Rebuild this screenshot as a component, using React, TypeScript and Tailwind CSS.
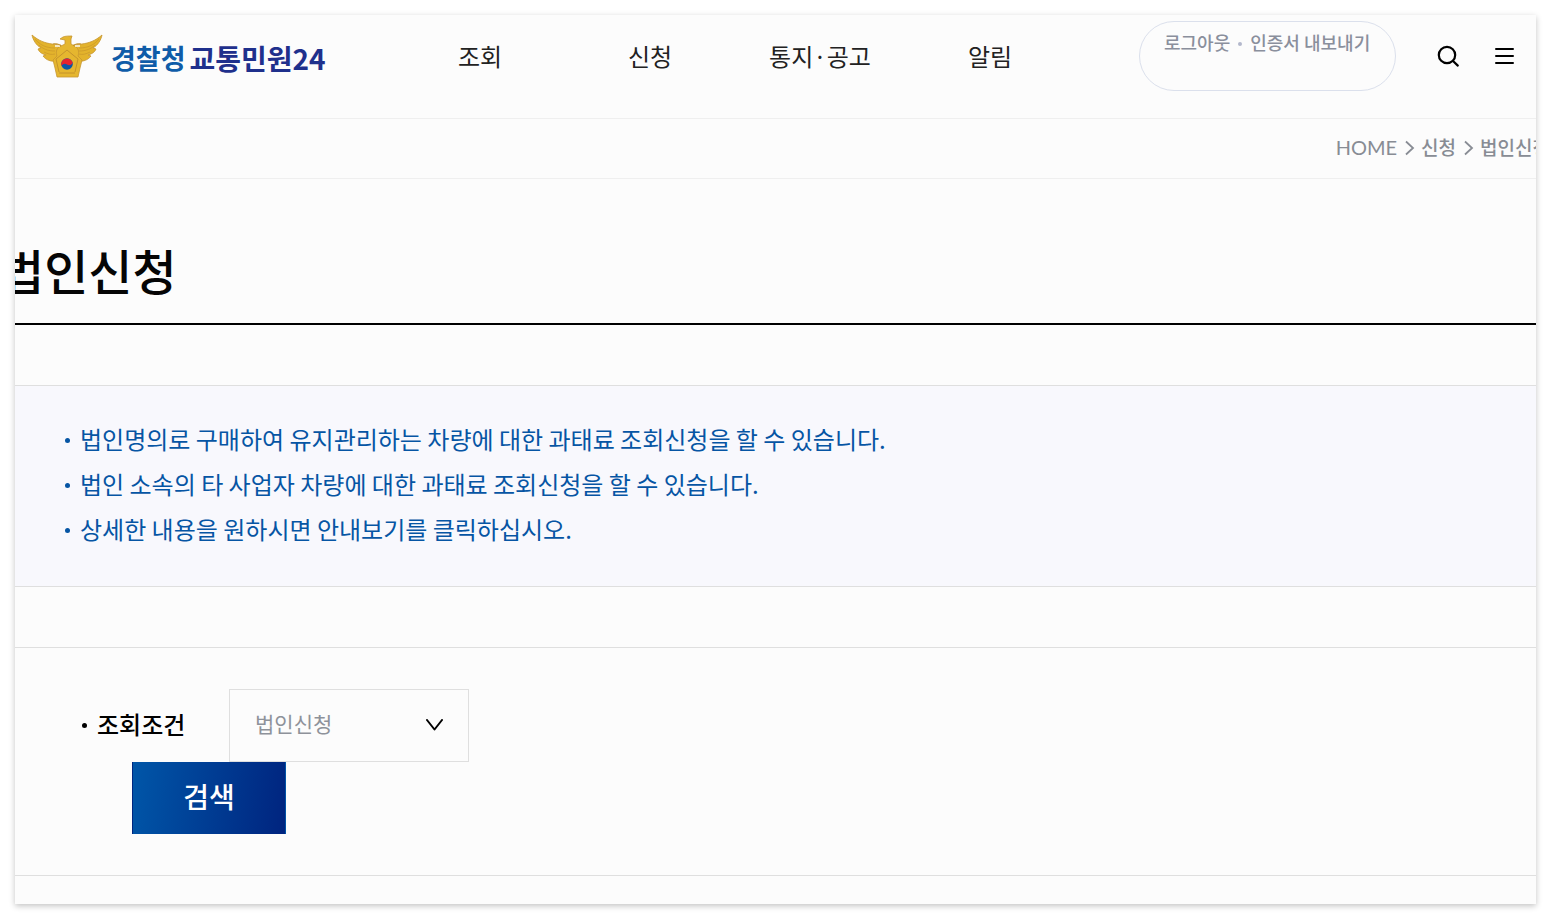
import { useState } from 'react'

const MENUS = ['조회', '신청', '통지·공고', '알림']

const NOTICES = [
  '법인명의로 구매하여 유지관리하는 차량에 대한 과태료 조회신청을 할 수 있습니다.',
  '법인 소속의 타 사업자 차량에 대한 과태료 조회신청을 할 수 있습니다.',
  '상세한 내용을 원하시면 안내보기를 클릭하십시오.',
]

function Emblem() {
  return (
    <svg className="w-[72px] h-[46px] shrink-0" viewBox="0 0 72 46" fill="none" aria-hidden="true">
      {/* wings */}
      <path
        d="M1 2c7 6 13 8 20 9l9 1v11l-4 5c-6 1-11-1-14-5l3-1c-4-1-7-3-8-6l3-1C5 12 2 7 1 2Z"
        fill="#e3b32c" stroke="#c79630" strokeWidth="0.8"
      />
      <path
        d="M71 2c-7 6-13 8-20 9l-9 1v11l4 5c6 1 11-1 14-5l-3-1c4-1 7-3 8-6l-3-1c5-3 8-8 9-13Z"
        fill="#e3b32c" stroke="#c79630" strokeWidth="0.8"
      />
      <path
        d="M4 6c5 6 11 9 20 9M8 12c4 4 9 6 16 6M13 19c4 2 7 3 11 2M68 6c-5 6-11 9-20 9M64 12c-4 4-9 6-16 6M59 19c-4 2-7 3-11 2"
        stroke="#cf9d2a" strokeWidth="0.9"
      />
      {/* head and body */}
      <path
        d="M29 6l3-2c2-1 6-1 9-1l-1 3v5l5 3c3 2 3 6 2 9l4 4-2 8-2 9H26l-2-9-2-8 4-4c-1-3-1-7 2-9l6-3V7l-5-1Z"
        fill="#e5b62f" stroke="#c79630" strokeWidth="0.8"
      />
      <path
        d="M24 12h5v2h-5zM44 12h5v2h-5z"
        fill="#f4e7c2"
      />
      <path
        d="M22 11c3-1 6 0 8 2M50 11c-3-1-6 0-8 2M36 17l-6 5-5 4 3 13M36 17l6 5 5 4-3 13M28 40h16"
        stroke="#c08f2b" strokeWidth="0.9"
      />
      {/* taegeuk */}
      <circle cx="36" cy="31" r="5.8" fill="#0b57a6" />
      <path d="M30.5 33a5.8 5.8 0 1 1 11.2-3.4c-1.2 3-3.8 3.2-5.7 1.8s-4.2-.9-5.5 1.6Z" fill="#e5232e" />
    </svg>
  )
}

function Crumb() {
  return (
    <svg className="w-2.5 h-4 mt-0.5 shrink-0" viewBox="0 0 10 16" fill="none" stroke="currentColor" strokeWidth="1.8" aria-hidden="true">
      <path d="M1 1.5 8 8l-7 6.5" />
    </svg>
  )
}

function Header() {
  return (
    <header className="flex items-center pt-1.5 pb-[27px] pl-4 pr-5 border-b border-[#efefef]">
      <a href="#home" className="flex items-center gap-2 w-[364px] shrink-0 whitespace-nowrap">
        <Emblem />
        <span className="flex gap-1 pt-1 leading-9 font-bold">
          <span className="text-[27px] text-[#0f5ca8]">경찰청</span>
          <span className="text-[28px] text-[#1f308c]">교통민원24</span>
        </span>
      </a>

      <nav className="grid grid-cols-4 flex-1 max-w-[680px]">
        {MENUS.map((menu) => (
          <a key={menu} href="#menu" className="text-center text-2xl leading-9 text-[#222] whitespace-nowrap">
            {menu}
          </a>
        ))}
      </nav>

      <div className="flex items-center ml-auto shrink-0">
        <div className="flex items-start gap-2 w-[257px] h-[70px] pt-1.5 pl-6 rounded-full border border-[#dbe0ec] text-lg leading-7 font-medium text-[#8a8f9c] whitespace-nowrap">
          <a href="#logout">로그아웃</a>
          <span className="size-1 mt-3.5 rounded-full bg-[#b3b8cc]" />
          <a href="#cert">인증서 내보내기</a>
        </div>
        <button type="button" aria-label="검색창 열기" className="ml-10">
          <svg className="size-6" viewBox="0 0 24 24" fill="none" stroke="#000" strokeWidth="2.2" strokeLinecap="round">
            <circle cx="11" cy="11" r="8.2" />
            <path d="m17 17 4.8 4.6" />
          </svg>
        </button>
        <button type="button" aria-label="전체메뉴" className="ml-8">
          <svg className="size-6" viewBox="0 0 24 24" fill="none" stroke="#000" strokeWidth="2" strokeLinecap="round">
            <path d="M4 5h17M4 12h17M4 19h17" />
          </svg>
        </button>
      </div>
    </header>
  )
}

export default function App() {
  const [condition, setCondition] = useState('corp')

  return (
    <div className="bg-white p-[15px] font-['Noto_Sans_CJK_KR',sans-serif]">
      <div className="overflow-hidden bg-[#fcfcfc] pb-7 shadow-[0_2px_6px_rgba(0,0,0,0.24)]">
        <Header />

        <div className="border-b border-[#efefef]">
          <ol className="flex items-center justify-end gap-2 -mr-3.5 h-[59px] pb-1 text-[19px] leading-7 font-medium text-[#888c94] whitespace-nowrap">
            <li className="font-[Lato,sans-serif] text-xl leading-7 font-normal">HOME</li>
            <li className="flex items-center gap-1.5"><Crumb />신청</li>
            <li className="flex items-center gap-1.5"><Crumb />법인신청</li>
          </ol>
        </div>

        <main>
          <h1 className="pt-15 pb-6 border-b-2 border-black text-5xl leading-[60px] font-medium text-[#050505]">
            <span className="-ml-[15px]">법인신청</span>
          </h1>

          <ul className="mt-[60px] pt-[30px] pb-[35px] px-[50px] border-y border-[#dfdfdf] bg-[#f8f8fd] text-2xl leading-[45px] text-[#0655a4]">
            {NOTICES.map((notice) => (
              <li key={notice} className="flex items-center gap-2.5">
                <span className="size-[5px] mt-1 shrink-0 rounded-full bg-[#0655a4]" />
                {notice}
              </li>
            ))}
          </ul>

          <form
            className="mt-[60px] py-[41px] px-[67px] border-y border-[#dfdfdf]"
            onSubmit={(e) => e.preventDefault()}
          >
            <div className="flex items-center">
              <label htmlFor="condition" className="flex items-center gap-2.5 w-[147px] pb-1 text-2xl leading-9 font-medium text-black">
                <span className="size-[5px] mt-1 rounded-full bg-black" />
                조회조건
              </label>
              <div className="relative">
                <select
                  id="condition"
                  value={condition}
                  onChange={(e) => setCondition(e.target.value)}
                  className="appearance-none w-60 h-[73px] pl-[25px] pb-1 border border-[#dfdfdf] bg-transparent text-[21px] text-[#8e929a]"
                >
                  <option value="corp">법인신청</option>
                </select>
                <svg
                  className="absolute right-[26px] top-[30px] w-[17px] h-3 pointer-events-none"
                  viewBox="0 0 17 12" fill="none" stroke="#000" strokeWidth="2" strokeLinecap="round" strokeLinejoin="round"
                >
                  <path d="m1 1 7.5 9.5L16 1" />
                </svg>
              </div>
            </div>
            <button
              type="submit"
              className="block ml-[50px] w-[154px] h-[72px] pb-1 border-x border-transparent bg-[linear-gradient(97deg,#0056a8,#00247f)] text-[28px] leading-9 font-medium text-white"
            >
              검색
            </button>
          </form>
        </main>
      </div>
    </div>
  )
}
